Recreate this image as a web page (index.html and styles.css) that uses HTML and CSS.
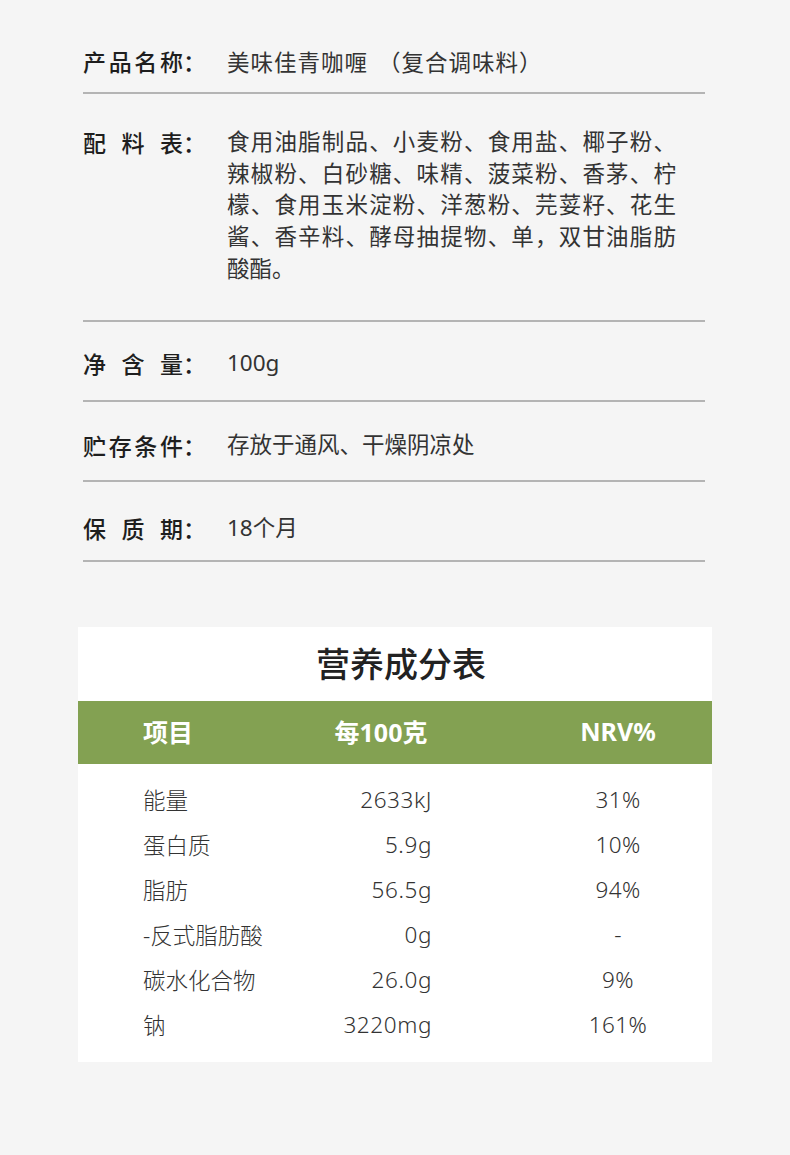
FILE: index.html
```html
<!DOCTYPE html>
<html lang="zh-CN">
<head>
<meta charset="utf-8">
<title>产品信息</title>
<link rel="stylesheet" href="styles.css">
</head>
<body>
<div class="page">
  <section class="info">
    <div class="row r1">
      <div class="label"><span class="lt">产品名称</span>：</div>
      <div class="val cjk">美味佳青咖喱<span class="po">（</span>复合调味料<span class="pc">）</span></div>
    </div>
    <div class="row r2">
      <div class="label"><span class="lt">配料表</span>：</div>
      <div class="val multi">食用油脂制品、小麦粉、食用盐、椰子粉、辣椒粉、白砂糖、味精、菠菜粉、香茅、柠檬、食用玉米淀粉、洋葱粉、芫荽籽、花生酱、香辛料、酵母抽提物、单，双甘油脂肪酸酯。</div>
    </div>
    <div class="row r3">
      <div class="label"><span class="lt">净含量</span>：</div>
      <div class="val">100g</div>
    </div>
    <div class="row r4">
      <div class="label"><span class="lt">贮存条件</span>：</div>
      <div class="val">存放于通风、干燥阴凉处</div>
    </div>
    <div class="row r5">
      <div class="label"><span class="lt">保质期</span>：</div>
      <div class="val">18个月</div>
    </div>
  </section>

  <section class="card">
    <h2 class="title">营养成分表</h2>
    <div class="grid thead">
      <div class="c1">项目</div>
      <div class="c2">每100克</div>
      <div class="c3">NRV%</div>
    </div>
    <div class="tbody">
      <div class="grid trow"><div class="c1">能量</div><div class="c2">2633kJ</div><div class="c3">31%</div></div>
      <div class="grid trow"><div class="c1">蛋白质</div><div class="c2">5.9g</div><div class="c3">10%</div></div>
      <div class="grid trow"><div class="c1">脂肪</div><div class="c2">56.5g</div><div class="c3">94%</div></div>
      <div class="grid trow"><div class="c1">-反式脂肪酸</div><div class="c2">0g</div><div class="c3">-</div></div>
      <div class="grid trow"><div class="c1">碳水化合物</div><div class="c2">26.0g</div><div class="c3">9%</div></div>
      <div class="grid trow"><div class="c1">钠</div><div class="c2">3220mg</div><div class="c3">161%</div></div>
    </div>
  </section>
</div>
</body>
</html>
```

FILE: styles.css
```css
* {
  box-sizing: border-box;
  margin: 0;
  padding: 0;
}

body {
  background: #f5f5f5;
  font-family: "Noto Sans", "Noto Sans CJK SC", sans-serif;
  color: #333;
}

.page {
  width: 790px;
  padding-bottom: 94px;
}

.info {
  margin: 0 85px 0 83px;
}

.row {
  display: flex;
  border-bottom: 2px solid #b4b4b4;
}

.r1 { padding: 45px 0 15px; }
.r2 { padding: 32px 0 35px; }
.r3 { padding: 25px 0 21px; }
.r4 { padding: 27px 0 19px; }
.r5 { padding: 30px 0 16px; }

.label {
  flex: none;
  width: 144px;
  font-family: "Noto Sans CJK SC", sans-serif;
  font-weight: 500;
  font-size: 23px;
  line-height: 32px;
  color: #1e1e1e;
  white-space: nowrap;
}

.lt {
  display: inline-block;
  width: 100px;
  text-align: justify;
  text-align-last: justify;
}

.val {
  font-size: 22.5px;
  line-height: 32px;
  color: #333;
}

.val.cjk {
  font-family: "Noto Sans CJK SC", sans-serif;
  letter-spacing: 1px;
}

.po {
  margin-left: 10px;
}

.val.multi {
  width: 449px;
  text-align: justify;
  line-height: 31.7px;
}

.card {
  margin: 65px 0 0 78px;
  width: 634px;
  background: #fff;
}

.title {
  height: 74px;
  padding: 0 0 3px 12px;
  display: flex;
  align-items: center;
  justify-content: center;
  font-family: "Noto Sans CJK SC", sans-serif;
  font-size: 34px;
  font-weight: 500;
  color: #222;
}

.grid {
  display: grid;
  grid-template-columns: 187px 102px auto;
  align-items: center;
  padding-left: 65px;
  white-space: nowrap;
}

.thead {
  height: 63px;
  padding-bottom: 3px;
  background: #83a152;
  color: #fff;
  font-weight: 700;
  font-size: 25px;
}

.thead .c2 {
  text-align: center;
}

.tbody {
  padding: 13px 0 15px;
}

.trow {
  height: 45px;
  font-size: 22.5px;
  font-weight: 300;
  color: #333;
}

.trow .c2 {
  text-align: right;
  letter-spacing: 0.6px;
}

.c3 {
  justify-self: end;
  width: 188px;
  text-align: center;
}

.trow .c3 {
  letter-spacing: 0.4px;
}
```
